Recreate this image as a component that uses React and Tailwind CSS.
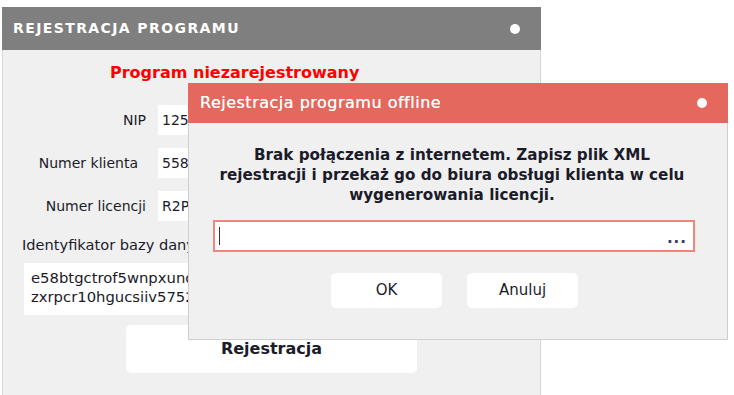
export default function App() {
  const font = { fontFamily: '"DejaVu Sans", Verdana, sans-serif' };

  return (
    <div className="relative h-[395px] w-[734px] overflow-hidden bg-white text-[#1b1b2a]" style={font}>
      {/* back window */}
      <div className="absolute left-[2px] top-[7px] flex h-[400px] w-[539px] flex-col border border-[#d6d6d6] bg-[#f0f0f0]">
        <div className="-mx-px -mt-px flex h-[43px] shrink-0 items-center justify-between bg-[#7f7f7f] pl-[11px] pr-[21px]">
          <span className="text-[14px] font-bold tracking-[1.4px] text-white">REJESTRACJA PROGRAMU</span>
          <span className="h-[10px] w-[10px] rounded-full bg-white" />
        </div>

        <div className="pl-[107px] pt-[13px] text-[16px] font-bold leading-[20px] text-[#ff0000]">
          Program niezarejestrowany
        </div>

        <div className="mt-[22px] flex flex-col gap-[13px]">
          {[
            ["NIP", "1250", ""],
            ["Numer klienta", "5580", "pr-[8px]"],
            ["Numer licencji", "R2P0", ""],
          ].map(([label, value, pad]) => (
            <div key={label} className="flex items-center">
              <span className={`w-[143px] text-right text-[14px] ${pad}`}>{label}</span>
              <div className="ml-[12px] flex h-[30px] w-[360px] items-center bg-white pl-[4px] text-[14px]">{value}</div>
            </div>
          ))}
        </div>

        <div className="ml-[19px] mt-[15px] text-[14.6px] leading-[18px]">Identyfikator bazy danych</div>
        <div className="ml-[21px] mt-[9px] h-[52px] w-[420px] bg-white px-[7px] pt-[5px] text-[14.8px] leading-[19px]">
          <div>e58btgctrof5wnpxunq1</div>
          <div>zxrpcr10hgucsiiv57521</div>
        </div>

        <div className="ml-[123px] mt-[10px] flex h-[48px] w-[291px] items-center justify-center rounded-[5px] bg-white text-[16px] font-bold">
          Rejestracja
        </div>
      </div>

      {/* front dialog */}
      <div className="absolute left-[188px] top-[83px] flex h-[257px] w-[540px] flex-col border border-[#cfcfcf] bg-[#f0f0f0]">
        <div className="-mx-px -mt-px flex h-[40px] shrink-0 items-center justify-between bg-[#e4685e] pl-[12px] pr-[21px]">
          <span className="text-[16px] font-medium tracking-[0.5px] text-white [text-shadow:0_0_0.4px_#fff]">Rejestracja programu offline</span>
          <span className="h-[10px] w-[10px] rounded-full bg-white" />
        </div>

        <div className="mt-[22px] pr-[12px] text-center text-[15.2px] font-bold leading-[20px]">
          <div>Brak połączenia z internetem. Zapisz plik XML</div>
          <div>rejestracji i przekaż go do biura obsługi klienta w celu</div>
          <div>wygenerowania licencji.</div>
        </div>

        <div className="ml-[24px] mt-[15px] flex h-[32px] w-[482px] items-center justify-between border-2 border-[#f0857b] bg-white pl-[4px] pr-[6px]">
          <span className="h-[18px] w-px bg-[#333]" />
          <span className="mt-[4px] text-[15px] font-bold leading-none tracking-[1px] text-[#3a3a5a]">...</span>
        </div>

        <div className="mt-[21px] flex justify-center gap-[25px] pr-[7px]">
          <div className="flex h-[35px] w-[111px] items-center justify-center rounded-[5px] bg-white text-[15px]">OK</div>
          <div className="flex h-[35px] w-[111px] items-center justify-center rounded-[5px] bg-white text-[15px]">Anuluj</div>
        </div>
      </div>
    </div>
  );
}
